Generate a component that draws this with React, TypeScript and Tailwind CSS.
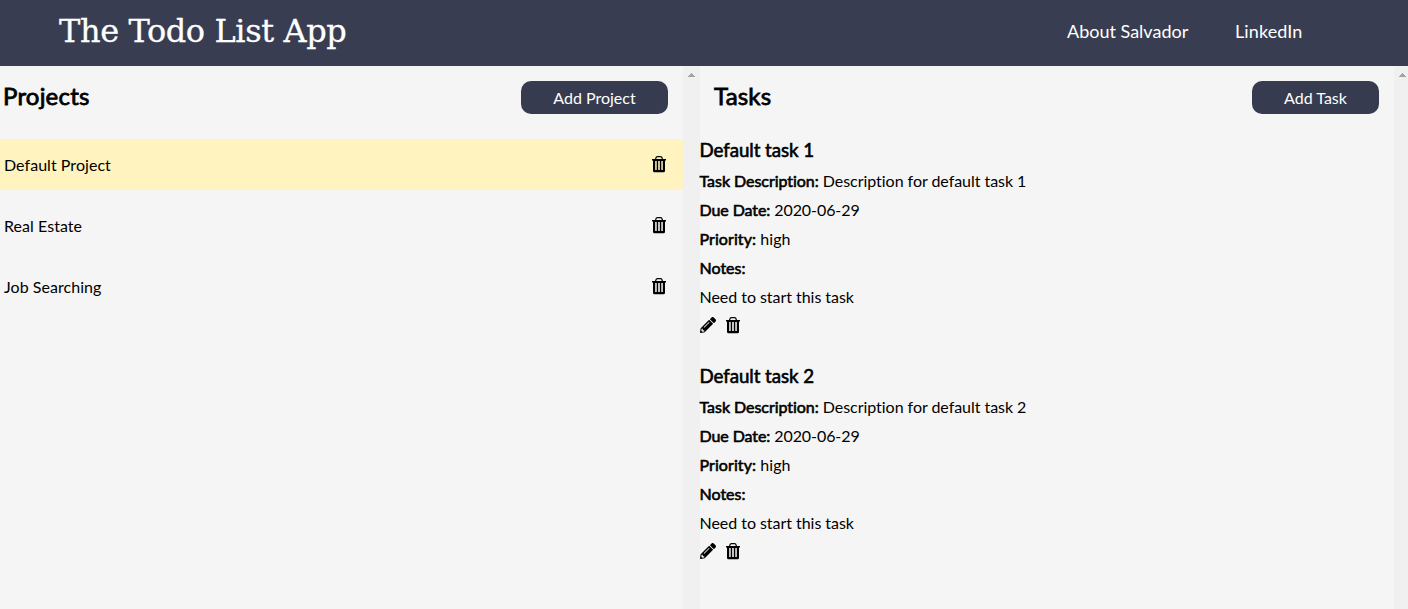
import React from "react";

const projects = ["Default Project", "Real Estate", "Job Searching"];
const tasks = [
  { title: "Default task 1", description: "Description for default task 1" },
  { title: "Default task 2", description: "Description for default task 2" },
];

function TrashIcon() {
  return (
    <svg width="14" height="17" viewBox="0 0 14 17" className="block shrink-0">
      <path d="M3.7 3.4V2.6Q4 .7 5.7 .7H8.3Q10 .7 10.3 2.6V3.4" fill="none" stroke="#000" strokeWidth="1.2" />
      <path
        fillRule="evenodd"
        d="M0 3H14V4.5H13V14.8Q13 16.3 11.6 16.3H2.4Q1 16.3 1 14.8V4.5H0ZM3.2 5V14H4.7V5ZM6.2 5V14H7.8V5ZM9.3 5V14H10.8V5Z"
      />
    </svg>
  );
}

function PencilIcon() {
  return (
    <svg width="16" height="16" viewBox="0 0 512 512" className="block shrink-0">
      <path d="M497.9 142.1l-46.1 46.1c-4.7 4.7-12.3 4.7-17 0l-111-111c-4.7-4.7-4.7-12.3 0-17l46.1-46.1c18.7-18.7 49.1-18.7 67.9 0l60.1 60.1c18.8 18.7 18.8 49.1 0 67.9zM284.2 99.8L21.6 362.4.4 483.9c-2.9 16.4 11.4 30.6 27.8 27.8l121.5-21.3 262.6-262.6c4.7-4.7 4.7-12.3 0-17l-111-111c-4.8-4.7-12.4-4.7-17.1 0zM124.1 339.9c-5.5-5.5-5.5-14.3 0-19.8l154-154c5.5-5.5 14.3-5.5 19.8 0s5.5 14.3 0 19.8l-154 154c-5.5 5.5-14.3 5.5-19.8 0zM88 424h48v36.3l-64.5 11.3-31.1-31.1L51.7 376H88v48z" />
    </svg>
  );
}

function ScrollTrack() {
  return (
    <div className="flex w-[17px] shrink-0 justify-center bg-[#f0f0f0] pt-[7px]">
      <svg width="7" height="4" viewBox="0 0 7 4" shapeRendering="crispEdges">
        <path d="M3 0H4V1H5V2H6V3H7V4H0V3H1V2H2V1H3Z" fill="#a3a3a3" />
      </svg>
    </div>
  );
}

function Heading({ children }: { children: React.ReactNode }) {
  return (
    <h2 className="text-[24px] leading-[29px] tracking-[0.2px] [-webkit-text-stroke:0.8px_#000]">
      {children}
    </h2>
  );
}

function Label({ children }: { children: React.ReactNode }) {
  return <span className="[-webkit-text-stroke:0.6px_#000]">{children}</span>;
}

function Button({ children, className }: { children: React.ReactNode; className: string }) {
  return (
    <button
      className={`flex h-[33px] items-start justify-center rounded-[10px] bg-[#373b4f] pt-[7px] text-[16px] leading-[19px] text-white ${className}`}
    >
      {children}
    </button>
  );
}

export default function App() {
  return (
    <div className="flex h-[609px] w-[1408px] flex-col overflow-hidden bg-[#f5f5f5] font-['Lato',sans-serif] text-[16px] leading-[19px] text-black [font-variant-ligatures:none]">
      <header className="flex h-[66px] shrink-0 items-center justify-between bg-[#393d51] pl-[59px] pr-[105px] text-white">
        <h1 className="whitespace-nowrap pb-[5px] font-['DejaVu_Serif',serif] text-[32px] leading-[40px] tracking-[-0.4px] [-webkit-text-stroke:0.3px_#fff]">
          The Todo List App
        </h1>
        <nav className="flex gap-[46px] pb-[5px] text-[18px] leading-[22px]">
          <a className="w-[122px]">About Salvador</a>
          <a className="w-[68px] tracking-[0.1px]">LinkedIn</a>
        </nav>
      </header>
      <main className="flex min-h-0 flex-1">
        <section className="flex w-[700px] shrink-0">
          <div className="flex-1">
            <div className="flex justify-between pl-[3px] pr-[15px] pt-[15px]">
              <Heading>Projects</Heading>
              <Button className="w-[147px]">Add Project</Button>
            </div>
            <ul className="mt-[25px] flex flex-col gap-[10px]">
              {projects.map((name, i) => (
                <li
                  key={name}
                  className={`flex h-[51px] items-center justify-between pl-[4px] pr-[17px] ${i === 0 ? "bg-[#fff3bf]" : ""}`}
                >
                  <span className="tracking-[0.05px]">{name}</span>
                  <TrashIcon />
                </li>
              ))}
            </ul>
          </div>
          <ScrollTrack />
        </section>
        <section className="flex w-[711px] shrink-0">
          <div className="flex-1">
            <div className="flex justify-between pl-[14px] pr-[15px] pt-[15px]">
              <Heading>Tasks</Heading>
              <Button className="w-[127px]">Add Task</Button>
            </div>
            <div className="-ml-[0.5px] mt-[25px] flex flex-col gap-[30px]">
              {tasks.map((task) => (
                <article key={task.title} className="flex h-[196px] flex-col gap-[10px]">
                  <h3 className="h-[22px] text-[18.72px] leading-[23px] tracking-[-0.05px] [-webkit-text-stroke:0.6px_#000]">
                    {task.title}
                  </h3>
                  <p className="tracking-[-0.04px]"><Label>Task Description:</Label> {task.description}</p>
                  <p className="tracking-[-0.08px]"><Label>Due Date:</Label> 2020-06-29</p>
                  <p className="tracking-[0.08px]"><Label>Priority:</Label> high</p>
                  <p><Label>Notes:</Label></p>
                  <p className="tracking-[-0.04px]">Need to start this task</p>
                  <div className="flex gap-[10px] pt-px">
                    <PencilIcon />
                    <TrashIcon />
                  </div>
                </article>
              ))}
            </div>
          </div>
          <ScrollTrack />
        </section>
      </main>
    </div>
  );
}
